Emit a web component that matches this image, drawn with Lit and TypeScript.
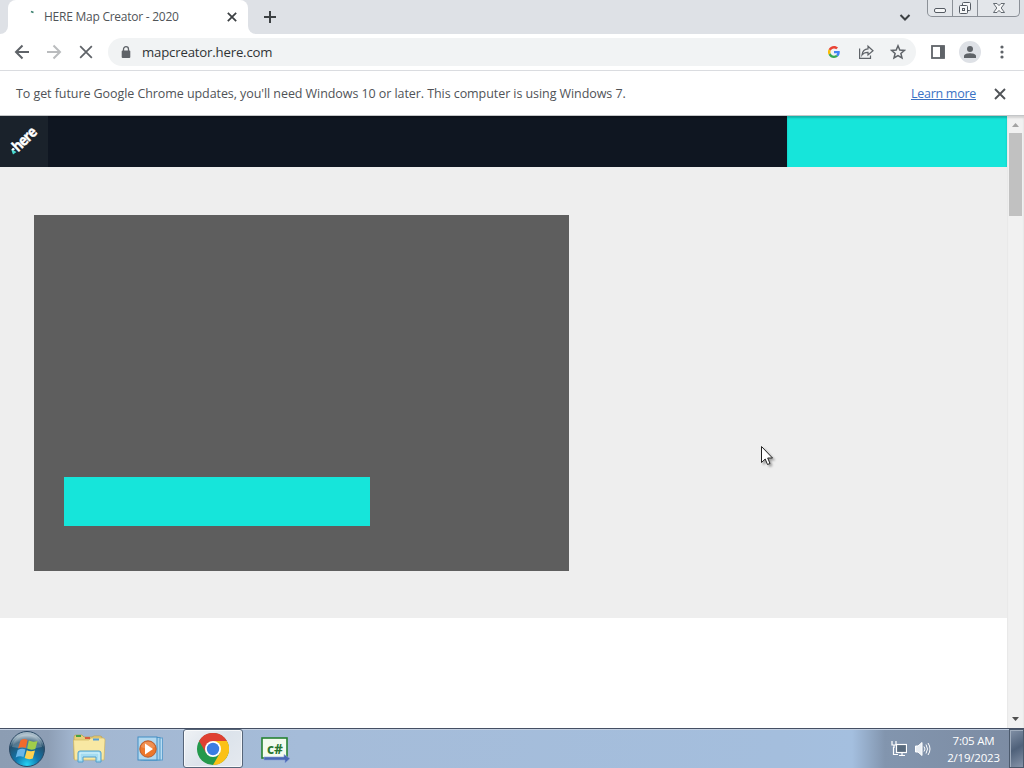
/**
 * Desktop view: a browser window that is loading the map creator page, with the taskbar below
 */

import { LitElement, html, css, svg } from 'lit';
import { customElement } from 'lit/decorators.js';

const crossIcon = (size: number, weight: number) => html`
  <svg width=${size} height=${size} viewBox="0 0 12 12" fill="none" stroke="currentColor" stroke-width=${weight}>
    <path d="M1 1L11 11M11 1L1 11"></path>
  </svg>
`;

@customElement('browser-tabs')
export class BrowserTabs extends LitElement {
  static styles = css`
    :host {
      display: flex;
      height: 34px;
      background: #dee1e6;
      color: #3c4043;
    }

    .edge {
      width: 8px;
      background: #fff;
    }

    .edge span {
      display: block;
      height: 34px;
      background: #dee1e6;
    }

    .edge.left span {
      border-bottom-right-radius: 8px;
    }

    .edge.right span {
      border-bottom-left-radius: 8px;
    }

    .tab {
      box-sizing: border-box;
      display: flex;
      align-items: center;
      width: 240px;
      padding: 0 11px 0 16px;
      background: #fff;
      border-radius: 8px 8px 0 0;
      box-shadow: 0 -8px 0 #dee1e6;
    }

    .spinner {
      width: 20px;
      height: 16px;
    }

    .title {
      flex: 1;
      padding-bottom: 1px;
      color: #505458;
      font-size: 12px;
      letter-spacing: -0.25px;
      white-space: nowrap;
    }

    .strip {
      display: flex;
      flex: 1;
      align-items: center;
      justify-content: space-between;
      padding: 0 13px 0 8px;
    }

    .window-buttons {
      box-sizing: border-box;
      display: flex;
      width: 93px;
      height: 17px;
      margin-right: 4px;
      border: 1px solid #8b9097;
      border-top: 0;
      border-radius: 0 0 5px 5px;
      background: #e3e6ea;
    }

    .window-buttons span {
      display: flex;
      align-items: center;
      justify-content: center;
      width: 24px;
    }

    .window-buttons span + span {
      border-left: 1px solid #8b9097;
    }

    .window-buttons span:last-child {
      flex: 1;
    }

    svg {
      display: block;
    }
  `;

  render() {
    return html`
      <div class="edge left"><span></span></div>
      <div class="tab">
        <svg class="spinner" viewBox="0 0 20 16" fill="none" stroke="#397f6d" stroke-width="1.6">
          <path d="M7 2.5L9.5 3.6"></path>
        </svg>
        <span class="title">HERE Map Creator - 2020</span>
        ${crossIcon(10, 2.1)}
      </div>
      <div class="edge right"><span></span></div>
      <div class="strip">
        <svg width="12" height="12" viewBox="0 0 12 12" fill="none" stroke="currentColor" stroke-width="2">
          <path d="M6 0V12M0 6H12"></path>
        </svg>
        <svg width="18" height="12" viewBox="0 0 18 12" fill="none" stroke="currentColor" stroke-width="2">
          <path d="M4.5 4L9 8.5L13.5 4"></path>
        </svg>
      </div>
      <div class="window-buttons">
        <span>
          <svg width="14" height="16" viewBox="0 0 14 16">
            <rect x="1.5" y="8.5" width="11" height="4" rx="1.5" fill="#f6f7f8" stroke="#555b63"></rect>
          </svg>
        </span>
        <span>
          <svg width="14" height="16" viewBox="0 0 14 16" fill="#f6f7f8" stroke="#555b63">
            <rect x="4.5" y="2.5" width="8" height="8" rx="1"></rect>
            <rect x="1.5" y="5.5" width="8" height="8" rx="1"></rect>
            <rect x="4.5" y="8.5" width="2" height="2"></rect>
          </svg>
        </span>
        <span>
          <svg width="14" height="16" viewBox="0 0 14 16" fill="#f6f7f8" stroke="#555b63" stroke-width=".9">
            <path d="M1.5 3.5H5L7 5.6L9 3.5H12.5L9.2 8L12.5 12.5H9L7 10.4L5 12.5H1.5L4.8 8Z"></path>
          </svg>
        </span>
      </div>
    `;
  }
}

@customElement('browser-toolbar')
export class BrowserToolbar extends LitElement {
  static styles = css`
    :host {
      box-sizing: border-box;
      display: flex;
      align-items: center;
      height: 37px;
      padding: 0 6px;
      background: #fff;
      border-bottom: 1px solid #dadce0;
      color: #5f6368;
    }

    .icon {
      display: flex;
      align-items: center;
      justify-content: center;
      width: 32px;
      height: 28px;
    }

    .disabled {
      color: #babcbe;
    }

    .address {
      box-sizing: border-box;
      display: flex;
      flex: 1;
      align-items: center;
      height: 28px;
      margin: 0 6px;
      padding: 0 2px;
      border-radius: 14px;
      background: #f1f3f4;
    }

    .url {
      flex: 1;
      color: #303336;
      font-size: 13.2px;
      letter-spacing: -0.18px;
    }

    .avatar {
      display: flex;
      align-items: center;
      justify-content: center;
      width: 22px;
      height: 22px;
      border-radius: 50%;
      background: #dee1e6;
    }
  `;

  render() {
    return html`
      <div class="icon">
        <svg width="16" height="16" viewBox="0 0 16 16" fill="none" stroke="currentColor" stroke-width="2">
          <path d="M15 8H2M8.5 1.5L2 8L8.5 14.5"></path>
        </svg>
      </div>
      <div class="icon disabled">
        <svg width="16" height="16" viewBox="0 0 16 16" fill="none" stroke="currentColor" stroke-width="2">
          <path d="M1 8H14M7.5 1.5L14 8L7.5 14.5"></path>
        </svg>
      </div>
      <div class="icon">${crossIcon(14, 1.5)}</div>
      <div class="address">
        <div class="icon">
          <svg width="10" height="13" viewBox="0 0 10 13">
            <path d="M2.5 5V3.2a2.5 2.5 0 0 1 5 0V5" fill="none" stroke="currentColor" stroke-width="1.3"></path>
            <rect x=".7" y="4.5" width="8.6" height="7.5" rx="1" fill="currentColor"></rect>
          </svg>
        </div>
        <span class="url">mapcreator.here.com</span>
        <div class="icon">
          <svg width="12" height="12" viewBox="0 0 48 48">
            <path fill="#ea4335" d="M24 9.5c3.5 0 6.7 1.2 9.2 3.6l6.9-6.9C35.9 2.4 30.5 0 24 0 14.6 0 6.5 5.4 2.6 13.2l8 6.2C12.4 13.7 17.7 9.5 24 9.5z"></path>
            <path fill="#4285f4" d="M47 24.5c0-1.6-.2-3.1-.4-4.5H24v9h12.9c-.6 3-2.3 5.5-4.8 7.2l7.7 6C44.4 38 47 31.8 47 24.5z"></path>
            <path fill="#fbbc05" d="M10.5 28.6a14.5 14.5 0 0 1 0-9.2l-8-6.2a24 24 0 0 0 0 21.6z"></path>
            <path fill="#34a853" d="M24 48c6.5 0 11.9-2.1 15.9-5.8l-7.7-6c-2.2 1.5-4.9 2.3-8.2 2.3-6.3 0-11.6-4.2-13.5-9.9l-8 6.2C6.5 42.6 14.6 48 24 48z"></path>
          </svg>
        </div>
        <div class="icon">
          <svg width="16" height="16" viewBox="0 0 16 16" fill="none" stroke="currentColor" stroke-width="1.2">
            <path d="M1.6 4.5V14.4H12.5V11.5"></path>
            <path d="M4 11C4.5 7 6.5 5 10 4.9V2.2L15 6.7L10 11V8.3C7.5 8.2 5.5 9 4 11Z"></path>
          </svg>
        </div>
        <div class="icon">
          <svg width="16" height="16" viewBox="0 0 16 16" fill="none" stroke="currentColor" stroke-width="1.5">
            <path d="M8 1.8L9.8 6L14.4 6.4L10.9 9.4L12 13.9L8 11.5L4 13.9L5.1 9.4L1.6 6.4L6.2 6Z"></path>
          </svg>
        </div>
      </div>
      <div class="icon">
        <svg width="14" height="14" viewBox="0 0 14 14">
          <rect x="1" y="1" width="12" height="12" fill="none" stroke="currentColor" stroke-width="1.8"></rect>
          <rect x="9" y="1" width="4.5" height="12" fill="currentColor"></rect>
        </svg>
      </div>
      <div class="icon">
        <div class="avatar">
          <svg width="12" height="12" viewBox="0 0 12 12" fill="currentColor">
            <circle cx="6" cy="3" r="3"></circle>
            <path d="M0 12V10C0 8 4 7.3 6 7.3S12 8 12 10V12Z"></path>
          </svg>
        </div>
      </div>
      <div class="icon">
        <svg width="4" height="14" viewBox="0 0 4 14" fill="currentColor">
          <circle cx="2" cy="2" r="1.6"></circle>
          <circle cx="2" cy="7" r="1.6"></circle>
          <circle cx="2" cy="12" r="1.6"></circle>
        </svg>
      </div>
    `;
  }
}

@customElement('update-notice')
export class UpdateNotice extends LitElement {
  static styles = css`
    :host {
      box-sizing: border-box;
      display: flex;
      align-items: center;
      height: 45px;
      padding: 1px 18px 0 16px;
      border-bottom: 1px solid #c4c6c8;
      background: #fff;
      color: #505357;
      font-size: 12.5px;
    }

    .message {
      flex: 1;
      letter-spacing: -0.07px;
      white-space: nowrap;
    }

    .link {
      margin-right: 18px;
      color: #3a72c4;
      text-decoration: underline;
      letter-spacing: -0.27px;
    }
  `;

  render() {
    return html`
      <span class="message"
        >To get future Google Chrome updates, you'll need Windows 10 or later. This computer is using Windows 7.</span
      >
      <span class="link">Learn more</span>
      ${crossIcon(12, 1.9)}
    `;
  }
}

@customElement('map-page')
export class MapPage extends LitElement {
  static styles = css`
    :host {
      display: flex;
      height: 612px;
      background: #fff;
    }

    .content {
      flex: 1;
    }

    .header {
      display: flex;
      height: 51px;
      background: #0f1621;
      box-shadow: inset 0 2px 2px #00000040;
    }

    .logo {
      width: 48px;
      height: 51px;
      background: #1a222b;
    }

    .logo text {
      font: bold 15px 'Open Sans', sans-serif;
      letter-spacing: -1px;
    }

    .header .action {
      width: 220px;
      margin-left: auto;
      background: #16e5da;
      box-shadow: inset 0 2px 2px #00000038;
    }

    .hero {
      box-sizing: border-box;
      height: 451px;
      padding: 48px 34px;
      background: #eee;
    }

    .card {
      box-sizing: border-box;
      display: flex;
      align-items: flex-end;
      width: 535px;
      height: 356px;
      padding: 0 30px 45px;
      background: #5e5e5e;
    }

    .card .action {
      width: 306px;
      height: 49px;
      background: #16e5da;
    }

    .scrollbar {
      display: flex;
      flex-direction: column;
      align-items: center;
      width: 17px;
      background: #f1f1f1;
      box-shadow: inset 0 2px 2px #00000020;
    }

    .thumb {
      width: 13px;
      height: 83px;
      margin-bottom: auto;
      background: #c1c1c1;
    }
  `;

  render() {
    return html`
      <div class="content">
        <div class="header">
          <svg class="logo" viewBox="0 0 48 51">
            <path d="M11 33L16.5 36L13 38.5Z" fill="#48dad0"></path>
            <circle cx="13.2" cy="33.3" r="1.3" fill="#fff"></circle>
            <text
              transform="translate(18 36.5) rotate(-44)"
              fill="#fff"
              stroke="#fff"
              stroke-width=".4"
              textLength="27"
              lengthAdjust="spacingAndGlyphs"
            >here</text>
          </svg>
          <div class="action"></div>
        </div>
        <div class="hero">
          <div class="card"><div class="action"></div></div>
        </div>
      </div>
      <div class="scrollbar">
        <svg width="17" height="17" viewBox="0 0 17 17"><path d="M5 11L8.5 7L12 11Z" fill="#a3a3a3"></path></svg>
        <div class="thumb"></div>
        <svg width="17" height="17" viewBox="0 0 17 17"><path d="M5 6L8.5 10L12 6Z" fill="#505050"></path></svg>
      </div>
    `;
  }
}

@customElement('task-bar')
export class TaskBar extends LitElement {
  static styles = css`
    :host {
      box-sizing: border-box;
      display: flex;
      height: 40px;
      border-top: 1px solid #454f63;
      background: linear-gradient(
        90deg,
        #8c9db3 0,
        #8d9eb5 48px,
        #a3b7d1 75px,
        #a5bcd9 300px,
        #a4bedd 780px,
        #a4bfdf 852px,
        #8295ae 885px,
        #7c8ba2 1024px
      );
      box-shadow: inset 0 1px 0 #c3d0e2;
    }

    svg {
      display: block;
    }

    .start {
      display: flex;
      align-items: center;
      justify-content: center;
      width: 54px;
    }

    .task {
      box-sizing: border-box;
      display: flex;
      align-items: center;
      justify-content: center;
      width: 60px;
      margin-right: 2px;
      border: 1px solid transparent;
    }

    .first {
      margin-left: 5px;
    }

    .active {
      border: 1px solid #566579;
      border-radius: 3px;
      background: linear-gradient(135deg, #eff2f5, #dce3eb 50%, #e5e9ef);
      box-shadow: inset 0 0 0 1px #ffffffb0;
    }

    .task text {
      font: bold 15px 'Open Sans', sans-serif;
    }

    .tray {
      display: flex;
      align-items: center;
      gap: 8px;
      margin-left: auto;
    }

    .clock {
      width: 61px;
      margin: 0 -3px 0 3px;
      color: #fff;
      font-size: 11.5px;
      letter-spacing: -0.2px;
      line-height: 17px;
      text-align: center;
    }

    .show-desktop {
      box-sizing: border-box;
      width: 15px;
      height: 39px;
      border: 1px solid #4b596c;
      background: linear-gradient(150deg, #8291a7, #4f617a 50%, #8593a8);
      box-shadow: inset 1px 1px 0 #a0adbe;
    }
  `;

  private renderStart() {
    return html`
      <svg width="38" height="38" viewBox="0 0 38 38">
        <defs>
          <radialGradient id="orb" cx=".5" cy=".95" r=".85">
            <stop offset="0" stop-color="#24d3f4"></stop>
            <stop offset=".4" stop-color="#1177ad"></stop>
            <stop offset=".8" stop-color="#24506d"></stop>
            <stop offset="1" stop-color="#a6bac7"></stop>
          </radialGradient>
        </defs>
        <circle cx="19" cy="19" r="17.5" fill="url(#orb)" stroke="#2b4965"></circle>
        <path d="M4 17A15.2 15.2 0 0 1 34 17Q19 20 4 17Z" fill="#ffffff38"></path>
        <path d="M12.5 10.5Q16 8 19.5 10L17.8 18Q14 16.5 10 18.5Z" fill="#f26a2c"></path>
        <path d="M20.8 10.5Q25 12.5 29.5 11L27.3 19Q23 20.5 19.2 18.6Z" fill="#a1cd4b"></path>
        <path d="M9.7 20Q14 17.8 17.5 19.5L15.5 27Q11.5 25.5 7.7 27.5Z" fill="#69b6e8"></path>
        <path d="M18.8 20.2Q22.5 22 27 20.5L24.8 28.5Q20.5 30 16.7 28Z" fill="#fdd250"></path>
      </svg>
    `;
  }

  private renderExplorer() {
    return html`
      <svg width="34" height="32" viewBox="0 0 34 32">
        <path d="M2 4Q2 2 4 2H10L12 4H20L22 3H28Q30 3 30 5V26H2Z" fill="#e9cf7c" stroke="#b99d50" stroke-width=".7"></path>
        <rect x="4" y="2" width="5" height="2" fill="#45a344"></rect>
        <rect x="13" y="4" width="5" height="2" fill="#d85c3c"></rect>
        <path d="M1.5 7H17L19 5H31Q33 5 33 7L32 27H2.5Z" fill="#f8e8a3" stroke="#d0b55f" stroke-width=".7"></path>
        <rect x="21" y="5.5" width="6" height="2" fill="#579ed7"></rect>
        <path d="M6 29V20Q6 18 8 18H27Q29 18 29 20V29H24V24H11V29Z" fill="#a4dcf1" stroke="#509fcc"></path>
        <path d="M8 27V20H27V27" fill="none" stroke="#d8f4fb"></path>
      </svg>
    `;
  }

  private renderPlayer() {
    return html`
      <svg width="30" height="28" viewBox="0 0 30 28">
        <rect x="8" y="3" width="18.5" height="22" fill="#b8dcf2" stroke="#619fcd"></rect>
        <rect x="5" y="2.5" width="19" height="22.5" fill="#a8d2ec" stroke="#5299c9"></rect>
        <rect x="2" y="2" width="19" height="23" fill="#b2d8ef" stroke="#438ec3"></rect>
        <circle cx="12" cy="14" r="8.2" fill="#ed772b" stroke="#b85b2c"></circle>
        <path d="M5 12A7.3 7.3 0 0 1 19 12Q12 15 5 12Z" fill="#ffffff30"></path>
        <path d="M9 8.5L17 14L9 19.5Z" fill="#fff"></path>
      </svg>
    `;
  }

  private renderChrome() {
    return html`
      <svg width="32" height="32" viewBox="0 0 32 32">
        <circle cx="16" cy="16" r="16" fill="#24994c"></circle>
        <path d="M22.9 20L16 32A16 16 0 0 0 29.9 8H16Z" fill="#fbc116"></path>
        <path d="M2.1 8A16 16 0 0 1 29.9 8H16L9.1 20Z" fill="#df4032"></path>
        <circle cx="16" cy="16" r="8" fill="#fff"></circle>
        <circle cx="16" cy="16" r="6.2" fill="#3b7de2"></circle>
      </svg>
    `;
  }

  private renderCSharp() {
    return html`
      <svg width="30" height="28" viewBox="0 0 30 28">
        <rect x="2" y="3" width="25" height="20" fill="#f3fbef" stroke="#268332" stroke-width="1.6"></rect>
        <text x="7" y="18.5" fill="#28752f" textLength="16" lengthAdjust="spacingAndGlyphs">c#</text>
        <path d="M4 22H24V19.5L30 23.5L25 28V25H4Z" fill="#4968b5" stroke="#8c9fd6" stroke-width=".6"></path>
      </svg>
    `;
  }

  private renderTray() {
    return svg`
      <g fill="none" stroke="#fff" stroke-width="1.2">
        <rect x="5.5" y="4.500" width="10" height="8" fill="#596b7e"></rect>
        <path d="M8 15.5H14M11 13V15M2.5 7V14.5H7"></path>
        <path d="M1 1V5H5V1M3 5V8"></path>
      </g>
    `;
  }

  render() {
    return html`
      <div class="start">${this.renderStart()}</div>
      <div class="task first">${this.renderExplorer()}</div>
      <div class="task">${this.renderPlayer()}</div>
      <div class="task active">${this.renderChrome()}</div>
      <div class="task">${this.renderCSharp()}</div>
      <div class="tray">
        <svg width="16" height="17" viewBox="0 0 16 17">${this.renderTray()}</svg>
        <svg width="17" height="16" viewBox="0 0 17 16" fill="none" stroke="#fff">
          <path d="M0.5 5H3L7 1.5V14.5L3 11H0.5Z" fill="#e9eef4"></path>
          <path d="M9 5.5Q11 8 9 10.500M11 3.5Q14 8 11 12.5M13 2Q17 8 13 14"></path>
        </svg>
        <div class="clock">7:05 AM<br />2/19/2023</div>
        <div class="show-desktop"></div>
      </div>
    `;
  }
}

@customElement('app-root')
export class AppRoot extends LitElement {
  static styles = css`
    :host {
      position: relative;
      display: block;
      width: 1024px;
      height: 768px;
      overflow: hidden;
      font-family: 'Open Sans', 'Noto Sans', sans-serif;
    }

    .cursor {
      position: absolute;
      left: 760px;
      top: 445px;
      filter: drop-shadow(2px 2px 1px #0005);
    }
  `;

  render() {
    return html`
      <browser-tabs></browser-tabs>
      <browser-toolbar></browser-toolbar>
      <update-notice></update-notice>
      <map-page></map-page>
      <task-bar></task-bar>
      <svg class="cursor" width="14" height="21" viewBox="0 0 14 21">
        <path d="M1.5 1.5V17.5L5.2 14L7.5 19.5L10 18.5L7.7 13H12.5Z" fill="#fff" stroke="#222"></path>
      </svg>
    `;
  }
}

declare global {
  interface HTMLElementTagNameMap {
    'app-root': AppRoot;
    'browser-tabs': BrowserTabs;
    'browser-toolbar': BrowserToolbar;
    'update-notice': UpdateNotice;
    'map-page': MapPage;
    'task-bar': TaskBar;
  }
}
